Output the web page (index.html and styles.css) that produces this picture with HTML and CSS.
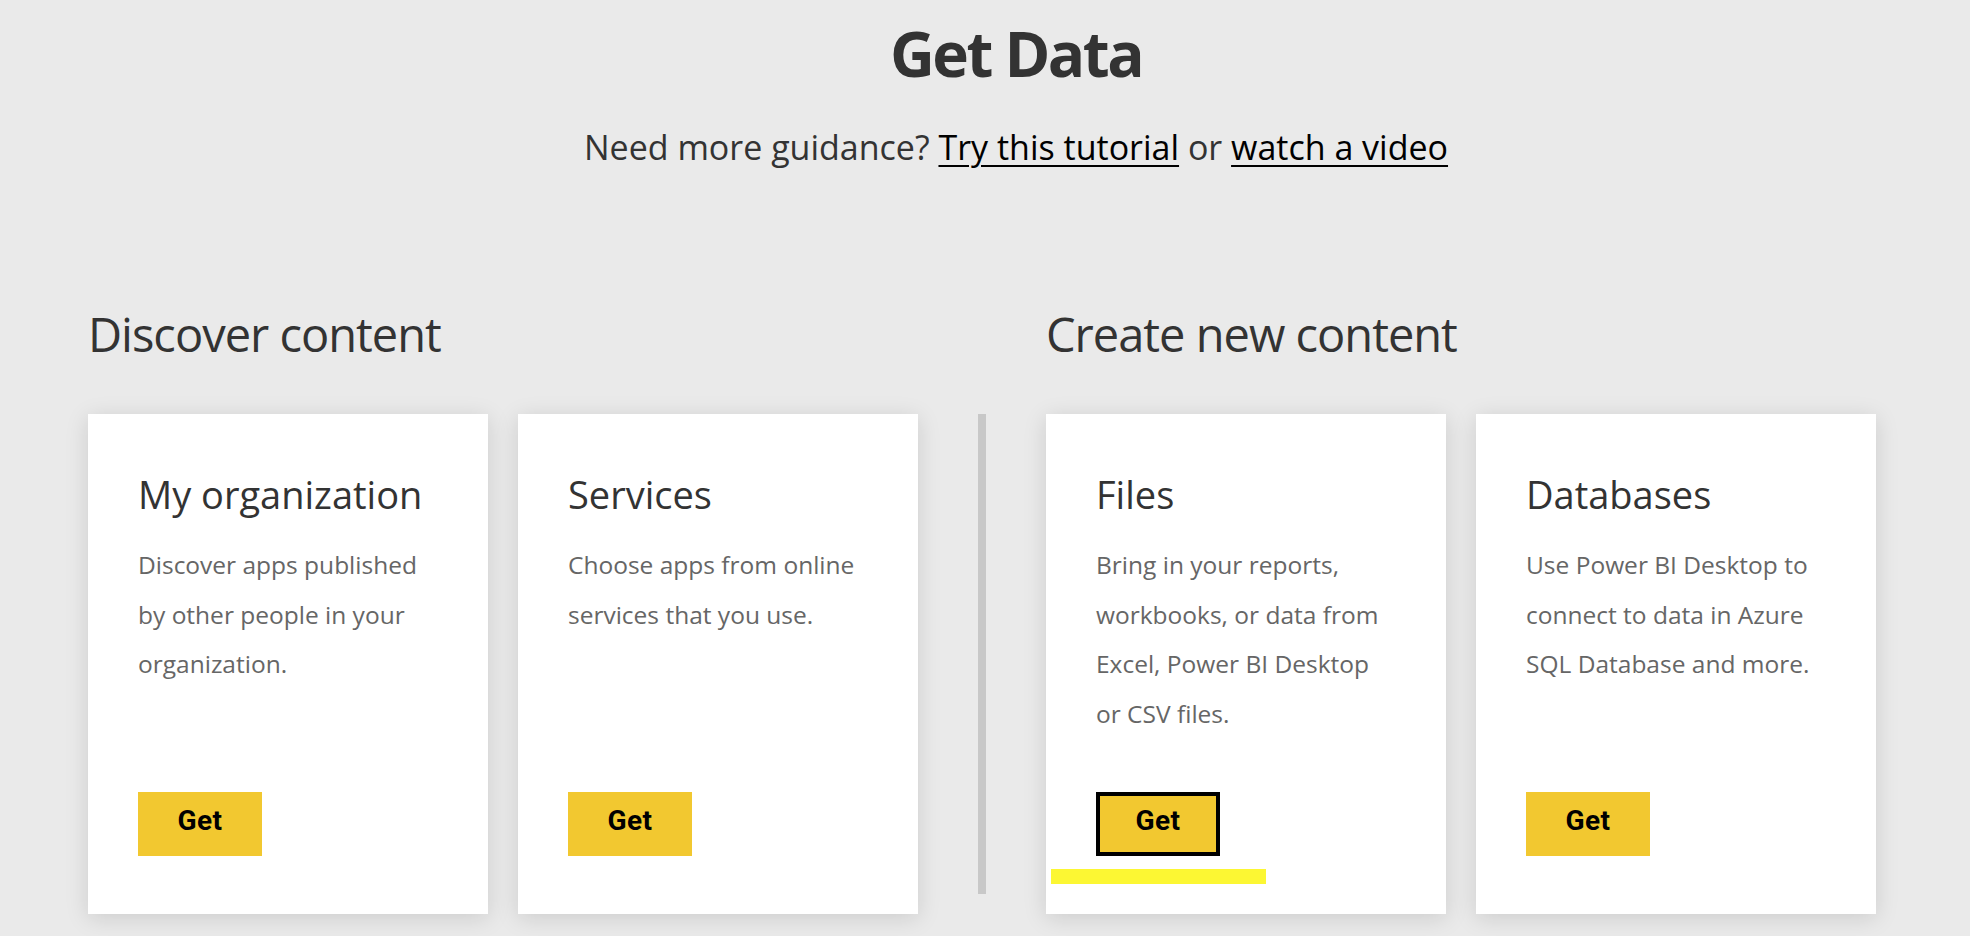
FILE: index.html
```html
<!DOCTYPE html>
<html lang="en">
<head>
<meta charset="utf-8">
<title>Get Data</title>
<link rel="stylesheet" href="styles.css">
</head>
<body>
<div class="page">
  <header class="intro">
    <h1 class="title">Get Data</h1>
    <p class="guidance">Need more guidance? <a href="#" class="link">Try this tutorial</a> or <a href="#" class="link">watch a video</a></p>
  </header>
  <main class="sections">
    <section class="group">
      <h2 class="group-title">Discover content</h2>
      <div class="cards">
        <div class="card">
          <h3 class="card-title">My organization</h3>
          <p class="card-text">Discover apps published by other people in your organization.</p>
          <button class="get-btn">Get</button>
        </div>
        <div class="card">
          <h3 class="card-title">Services</h3>
          <p class="card-text">Choose apps from online services that you use.</p>
          <button class="get-btn">Get</button>
        </div>
      </div>
    </section>
    <div class="divider"></div>
    <section class="group">
      <h2 class="group-title">Create new content</h2>
      <div class="cards">
        <div class="card">
          <h3 class="card-title">Files</h3>
          <p class="card-text">Bring in your reports, workbooks, or data from Excel, Power BI Desktop or CSV files.</p>
          <button class="get-btn get-btn-focus">Get</button>
          <span class="highlight"></span>
        </div>
        <div class="card">
          <h3 class="card-title">Databases</h3>
          <p class="card-text">Use Power BI Desktop to connect to data in Azure SQL Database and more.</p>
          <button class="get-btn">Get</button>
        </div>
      </div>
    </section>
  </main>
</div>
</body>
</html>
```

FILE: styles.css
```css
html, body {
  margin: 0;
  padding: 0;
}
body {
  background: #eaeaea;
  font-family: "Open Sans", "Noto Sans", "Liberation Sans", sans-serif;
  color: #333333;
  width: 1970px;
  height: 936px;
  overflow: hidden;
}
.page {
  display: flex;
  flex-direction: column;
}
.intro {
  display: flex;
  flex-direction: column;
  align-items: center;
  padding-left: 62px;
  padding-top: 13px;
}
.title {
  margin: 0;
  font-size: 62px;
  line-height: 80px;
  font-weight: 700;
  color: #333333;
  letter-spacing: -2.5px;
}
.guidance {
  margin: 34px 0 0 0;
  font-size: 34px;
  line-height: 40px;
  color: #333333;
}
.link {
  color: #000000;
  text-decoration: underline;
  text-underline-offset: 5px;
  text-decoration-thickness: 2px;
}
.sections {
  display: flex;
  align-items: flex-end;
  padding-left: 88px;
  margin-top: 137px;
}
.group {
  display: flex;
  flex-direction: column;
}
.group-title {
  margin: 0 0 50px 0;
  font-size: 47px;
  line-height: 60px;
  font-weight: 400;
  color: #333333;
  letter-spacing: -1px;
}
.cards {
  display: flex;
  gap: 30px;
}
.card {
  position: relative;
  box-sizing: border-box;
  width: 400px;
  height: 500px;
  background: #ffffff;
  padding: 55px 55px 58px 50px;
  display: flex;
  flex-direction: column;
  align-items: flex-start;
  box-shadow: 0 4px 22px rgba(0, 0, 0, 0.13);
}
.card-title {
  margin: 0;
  font-size: 38px;
  line-height: 50px;
  font-weight: 400;
  color: #333333;
}
.card-text {
  margin: 21px 0 0 0;
  font-size: 24.5px;
  line-height: 49.5px;
  color: #666666;
}
.get-btn {
  margin-top: auto;
  box-sizing: border-box;
  width: 124px;
  height: 64px;
  background: #f2c830;
  border: none;
  font-family: "Roboto", "Liberation Sans", sans-serif;
  font-weight: 700;
  font-size: 28px;
  line-height: 32px;
  color: #000000;
  letter-spacing: 0.4px;
  padding: 0 0 7px 0;
}
.get-btn-focus {
  border: 4px solid #000000;
}
.divider {
  width: 8px;
  height: 480px;
  background: #c8c8c8;
  margin: 0 60px 20px 60px;
}
.highlight {
  position: absolute;
  left: 5px;
  top: 455px;
  width: 215px;
  height: 15px;
  background: #fcf733;
}
```
